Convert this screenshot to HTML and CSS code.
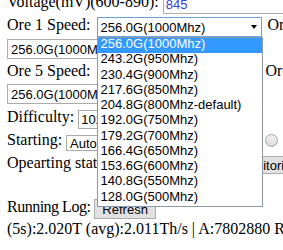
FILE: index.html
```html
<!DOCTYPE html>
<html lang="en">
<head>
  <meta charset="UTF-8">
  <title>Miner Settings</title>
  <link rel="stylesheet" href="styles.css">
</head>
<body>

<div class="page">
  <div class="line">
    Voltage(mV)(600-890): <input class="volt" type="text" value="845">
  </div>

  <div class="line">
    Ore 1 Speed: <span class="sel-wrap"><select class="speed focus"></select><span class="dropdown" id="speedList"></span></span>
    Ore 2 Speed: <select class="speed"></select>
    Ore 3 Speed: <select class="speed"></select>
    Ore 4 Speed:
  </div>
  <div class="line">
    <select class="speed wrapped"></select>
  </div>

  <div class="line">
    Ore 5 Speed: <select class="speed gap"></select>
    Ore 6 Speed: <select class="speed"></select>
    Ore 7 Speed: <select class="speed"></select>
    Ore 8 Speed:
  </div>
  <div class="line">
    <select class="speed wrapped low"></select>
  </div>

  <div class="line">
    Difficulty: <input class="diff" type="text" value="1024">
  </div>

  <div class="line">
    Starting: <select class="start"><option>Auto</option><option>Manual</option></select>
    <input class="radio" type="radio" name="run">
  </div>

  <div class="line">
    Opearting status: <button class="btn monitor">Start Monitoring</button>
  </div>

  <div class="line short"></div>

  <div class="line short">
    <span class="log-label">Running Log:</span> <button class="btn refresh">Refresh</button>
  </div>

  <div class="line short">
    (5s):2.020T (avg):2.011Th/s | A:7802880 R:1204 HW:0
  </div>
</div>

<script>
  const speeds = [
    "256.0G(1000Mhz)", "243.2G(950Mhz)", "230.4G(900Mhz)", "217.6G(850Mhz)",
    "204.8G(800Mhz-default)", "192.0G(750Mhz)", "179.2G(700Mhz)", "166.4G(650Mhz)",
    "153.6G(600Mhz)", "140.8G(550Mhz)", "128.0G(500Mhz)"
  ];

  document.querySelectorAll("select.speed").forEach(sel => {
    speeds.forEach(s => {
      const option = document.createElement("option");
      option.text = s;
      sel.appendChild(option);
    });
  });

  // the open list of the first select
  const list = document.getElementById("speedList");
  speeds.forEach((s, i) => {
    const item = document.createElement("span");
    item.className = i === 0 ? "opt active" : "opt";
    item.textContent = s;
    list.appendChild(item);
  });
</script>

</body>
</html>
```

FILE: styles.css
```css
html, body {
  overflow: hidden;
}

body {
  margin: 0;
  font-family: "Liberation Serif", "Times New Roman", serif;
  font-size: 16px;
  color: #000;
  background: #fff;
}

.page {
  width: 1100px;
  margin-top: -10px;
  padding-left: 7px;
}

.line {
  height: 23px;
  line-height: 23px;
  white-space: nowrap;
}

.line.short {
  height: 22px;
  line-height: 22px;
}

input, select, button {
  font-family: "Liberation Sans", Arial, sans-serif;
  font-size: 13px;
  line-height: normal;
  margin: 0;
  box-sizing: border-box;
  color: #000;
  vertical-align: top;
}

input[type=text] {
  height: 20px;
  border: 1px solid #ababab;
  padding: 0 2px;
}

.volt {
  width: 200px;
  margin-top: 4px;
  color: #3c3cd8;
}

input.diff {
  width: 120px;
  height: 19px;
  margin-top: 5px;
}

select {
  -webkit-appearance: none;
  appearance: none;
  height: 20px;
  border: 1px solid #ababab;
  border-radius: 0;
  background: #fff;
  padding: 0 3px;
}

.speed {
  width: 165px;
  margin-top: 4px;
}

.speed.gap {
  margin-left: 2px;
}

.speed.wrapped {
  margin-top: 3px;
}

.speed.low {
  margin-top: 2px;
}

.sel-wrap .speed {
  margin-top: 0;
}

.speed.focus {
  border-color: #6aa1db;
}

.start {
  width: 190px;
  height: 16px;
  margin-top: 7px;
}

.sel-wrap {
  position: relative;
  display: inline-block;
  margin: 4px 2px 0;
  vertical-align: top;
  line-height: normal;
}

.sel-wrap::after {
  content: "";
  position: absolute;
  right: 5px;
  top: 8px;
  border-left: 3px solid transparent;
  border-right: 3px solid transparent;
  border-top: 4px solid #000;
}

.dropdown {
  position: absolute;
  left: 0;
  top: 20px;
  z-index: 5;
  display: block;
  width: 166px;
  box-sizing: border-box;
  border: 1px solid #8c9bab;
  background: #fff;
  font-family: "Liberation Sans", Arial, sans-serif;
  font-size: 13px;
  line-height: 12.5px;
}

.opt {
  display: block;
  height: 15.27px;
  padding-left: 3px;
}

.opt.active {
  background: #3399ff;
  color: #fff;
}

.radio {
  -webkit-appearance: none;
  appearance: none;
  width: 13px;
  height: 13px;
  margin: 5.5px 0 0 5px;
  border: 1px solid #a3a3a3;
  border-radius: 50%;
  background: linear-gradient(#f2f2f2, #dadada);
}

.btn {
  height: 20px;
  padding: 0 7px;
  border: 1px solid #adadad;
  border-radius: 0;
  background: #e1e1e1;
}

.monitor {
  height: 18px;
  margin: 5px 0 0 79px;
}

.refresh {
  margin-top: 3px;
}

.log-label {
  letter-spacing: -0.5px;
}
```
